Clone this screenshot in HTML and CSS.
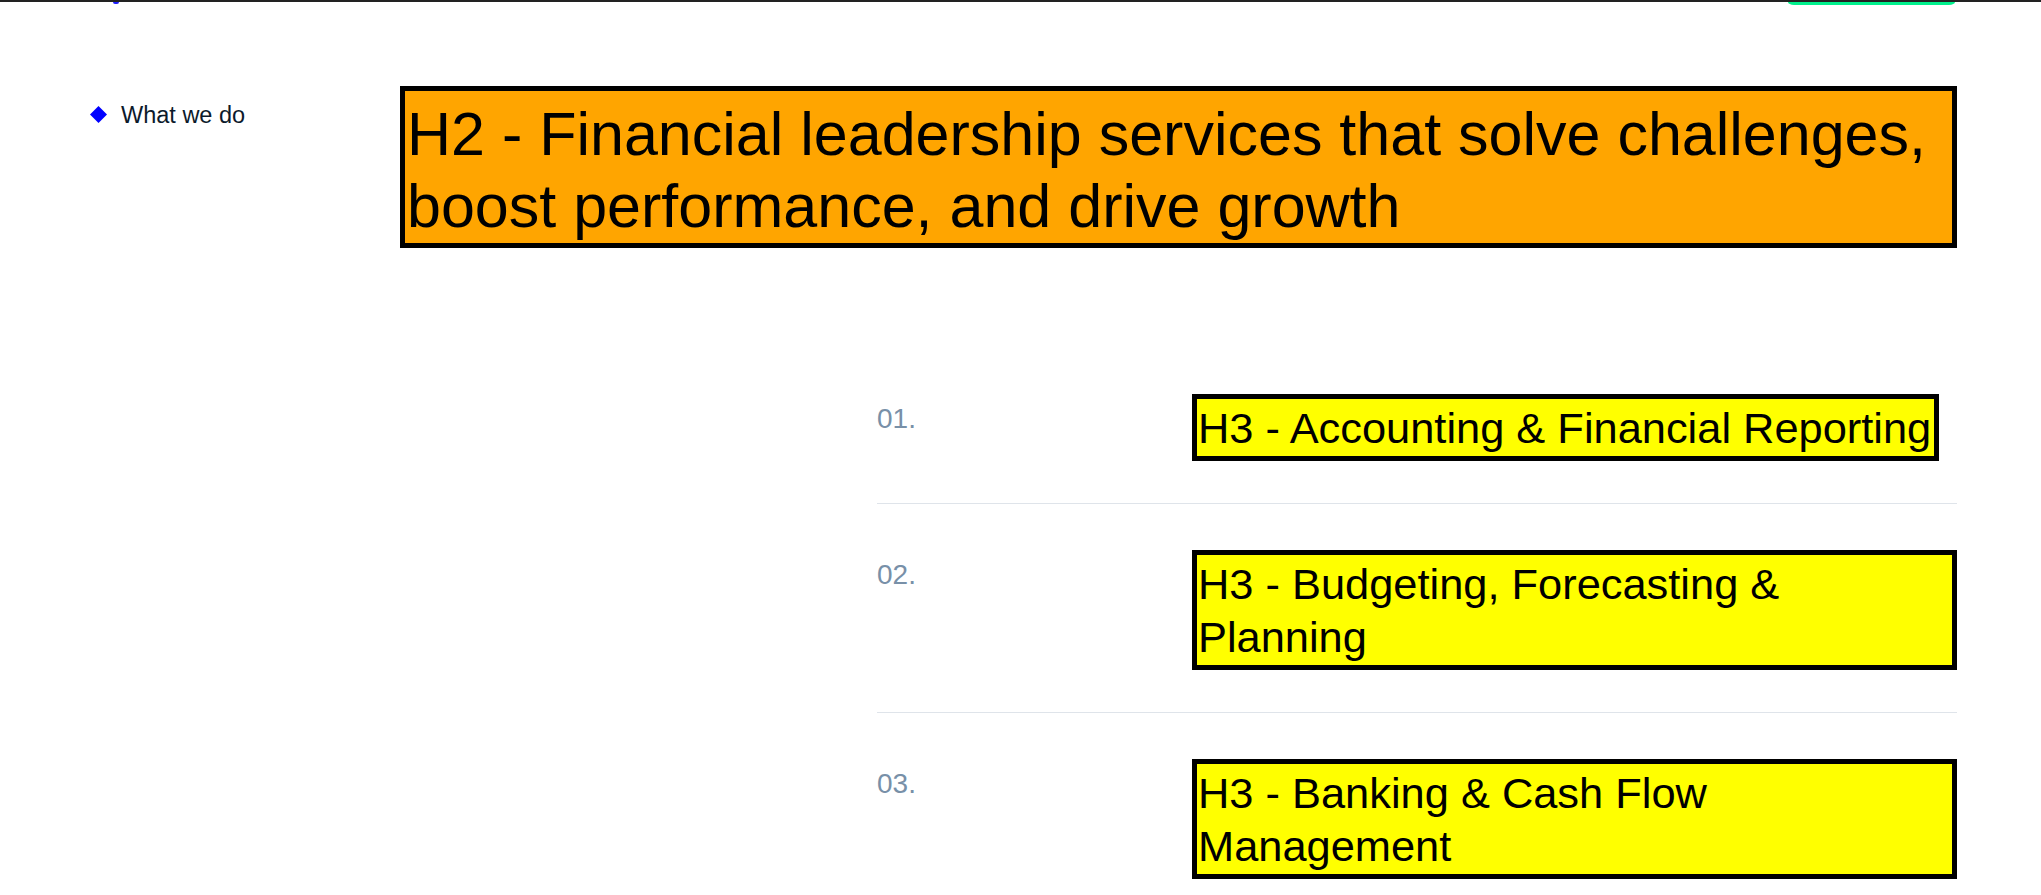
FILE: index.html
```html
<!DOCTYPE html>
<html lang="en">
<head>
    <meta charset="UTF-8">
    <meta name="viewport" content="width=device-width, initial-scale=1.0">
    <title>What we do</title>
    <link rel="stylesheet" href="styles.css">
</head>
<body>

<header class="topbar">
    <span class="topbar-mark"></span>
    <span class="topbar-button"></span>
</header>

<section class="services">
    <div class="services-label">
        <svg class="diamond" width="17" height="17" viewBox="0 0 17 17">
            <polygon points="8.5,0 17,8.5 8.5,17 0,8.5" fill="#0000ff"/>
        </svg>
        <span>What we do</span>
    </div>

    <div class="services-main">
        <h2>H2 - Financial leadership services that solve challenges, boost performance, and drive growth</h2>

        <ol class="service-list">
            <li class="service-item">
                <span class="service-num">01.</span>
                <div><h3>H3 - Accounting &amp; Financial Reporting</h3></div>
            </li>
            <li class="service-item">
                <span class="service-num">02.</span>
                <div><h3>H3 - Budgeting, Forecasting &amp; Planning</h3></div>
            </li>
            <li class="service-item">
                <span class="service-num">03.</span>
                <div><h3>H3 - Banking &amp; Cash Flow Management</h3></div>
            </li>
        </ol>
    </div>
</section>

</body>
</html>
```

FILE: styles.css
```css
* {
    box-sizing: border-box;
}
body {
    margin: 0;
    font-family: "Liberation Sans", Arial, sans-serif;
    background: #fff;
    color: #000;
}
/* полоска шапки, которая осталась сверху после прокрутки */
.topbar {
    position: relative;
    height: 2px;
    background-color: #222;
}
.topbar-mark {
    position: absolute;
    left: 113px;
    top: 2px;
    width: 6px;
    height: 2px;
    border-radius: 0 0 3px 3px;
    background-color: #2020ff;
}
.topbar-button {
    position: absolute;
    right: 86px;
    top: 2px;
    width: 167px;
    height: 3px;
    border-radius: 0 0 6px 6px / 0 0 3px 3px;
    background-color: #00f08c;
}
.services {
    display: grid;
    grid-template-columns: 310px 1fr;
    padding: 84px 84px 0 90px;
}
.services-label {
    display: flex;
    align-items: center;
    gap: 14px;
    padding-top: 16px;
    align-self: start;
    font-size: 23.5px;
    color: #0c1a2b;
}
.diamond {
    flex: none;
    margin-bottom: 3px;
}
h2 {
    margin: 0;
    padding: 7px 0 1px 2px;
    border: 5px solid #000;
    background-color: #ffa500;
    font-size: 61px;
    font-weight: normal;
    line-height: 72px;
}
.service-list {
    list-style: none;
    margin: 100px 0 0 auto;
    padding: 0;
    width: 1080px;
}
.service-item {
    display: grid;
    grid-template-columns: 315px 1fr;
    padding: 46px 0 42px;
    border-bottom: 1px solid #dfe4ea;
}
.service-num {
    margin-top: 9px;
    font-size: 28px;
    color: #7890a8;
}
h3 {
    display: inline-block;
    margin: 0;
    padding: 3px 3px 1px 1px;
    border: 5px solid #000;
    background-color: #ffff00;
    font-size: 43.4px;
    font-weight: normal;
    line-height: 53px;
}
```
